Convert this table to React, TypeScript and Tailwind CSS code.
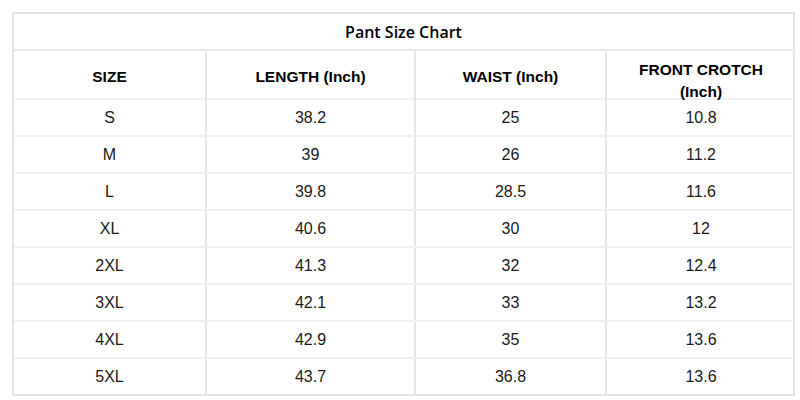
import React from 'react';

const rows = [
  ['S', '38.2', '25', '10.8'],
  ['M', '39', '26', '11.2'],
  ['L', '39.8', '28.5', '11.6'],
  ['XL', '40.6', '30', '12'],
  ['2XL', '41.3', '32', '12.4'],
  ['3XL', '42.1', '33', '13.2'],
  ['4XL', '42.9', '35', '13.6'],
  ['5XL', '43.7', '36.8', '13.6'],
];

const cols = 'grid grid-cols-[191px_209px_191px_190px]';

export default function App() {
  return (
    <div className="w-[800px] h-[400px] bg-white pl-3 pt-3">
      <div className="w-[783px] border-2 border-[#e4e4e4] font-['Liberation_Sans',Arial,sans-serif] text-[#1a1a1a]">
        <div className="h-[35px] flex items-center justify-center font-['Open_Sans',sans-serif] font-semibold text-[16px] text-black">
          Pant Size Chart
        </div>
        <div className={`${cols} h-[49px] border-t-2 border-[#e8e8e8] font-bold text-[15.5px] text-black`}>
          <div className="flex items-center justify-center">SIZE</div>
          <div className="flex items-center justify-center border-l-2 border-[#e4e4e4]">LENGTH (Inch)</div>
          <div className="flex items-center justify-center border-l-2 border-[#e4e4e4]">WAIST (Inch)</div>
          <div className="flex items-center justify-center text-center leading-[22px] pt-2 border-l-2 border-[#e4e4e4]">
            FRONT CROTCH
            <br />
            (Inch)
          </div>
        </div>
        {rows.map((r, i) => (
          <div key={i} className={`${cols} h-[37px] border-t-2 border-[#f0f0f0] text-[16px]`}>
            {r.map((c, j) => (
              <div
                key={j}
                className={`flex items-center justify-center ${j > 0 ? 'border-l-2 border-[#e4e4e4]' : ''}`}
              >
                {c}
              </div>
            ))}
          </div>
        ))}
      </div>
    </div>
  );
}
